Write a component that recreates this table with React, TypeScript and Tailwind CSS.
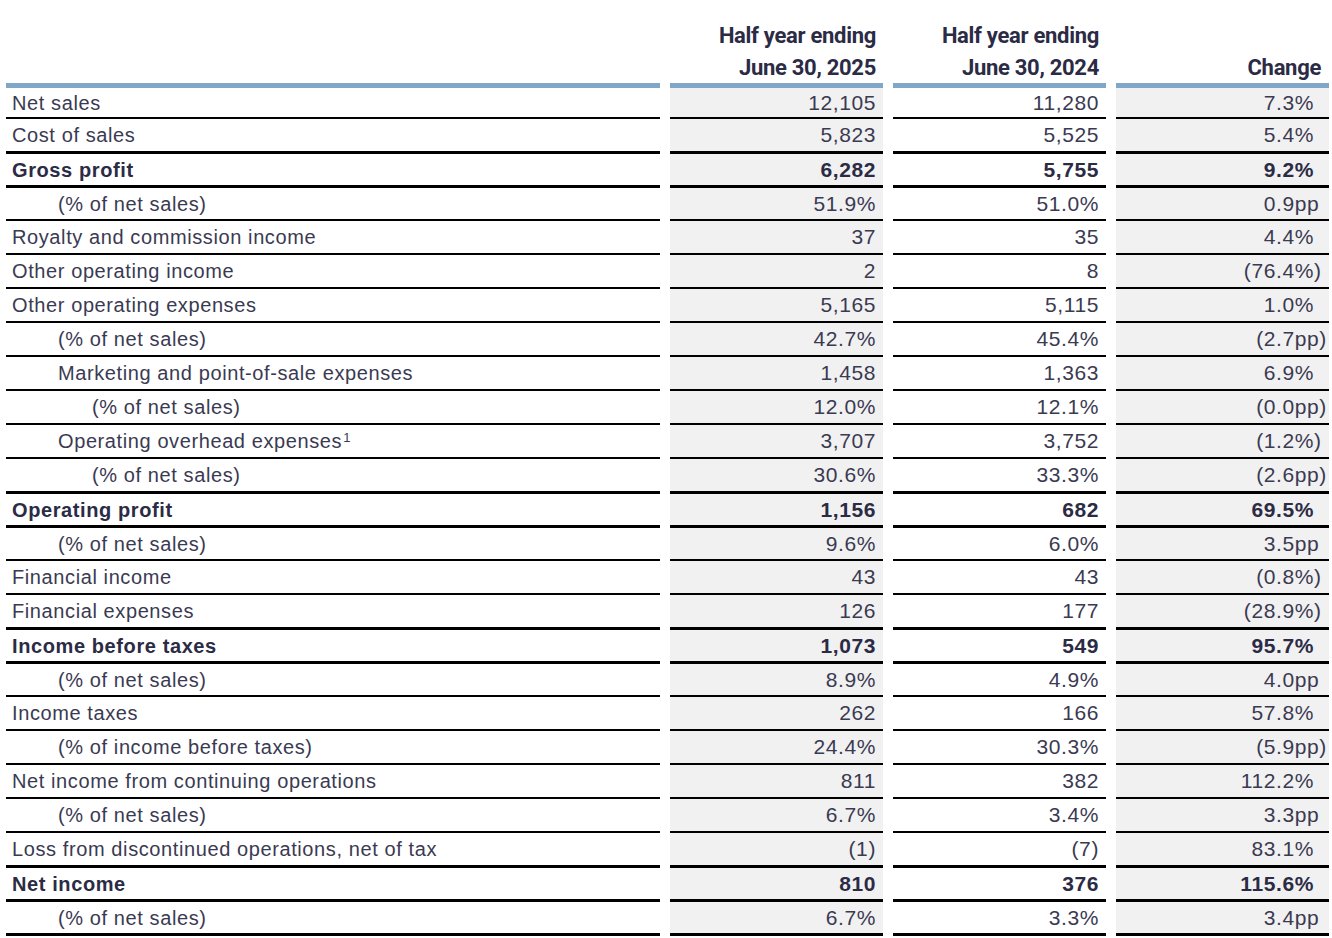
import React from "react";

type Row = { label: string; indent: 0 | 1 | 2; v: [string, string, string]; bold?: boolean; sup?: string };

const rows: Row[] = [
  { label: "Net sales", indent: 0, v: ["12,105", "11,280", "7.3%"] },
  { label: "Cost of sales", indent: 0, v: ["5,823", "5,525", "5.4%"] },
  { label: "Gross profit", indent: 0, v: ["6,282", "5,755", "9.2%"], bold: true },
  { label: "(% of net sales)", indent: 1, v: ["51.9%", "51.0%", "0.9pp"] },
  { label: "Royalty and commission income", indent: 0, v: ["37", "35", "4.4%"] },
  { label: "Other operating income", indent: 0, v: ["2", "8", "(76.4%)"] },
  { label: "Other operating expenses", indent: 0, v: ["5,165", "5,115", "1.0%"] },
  { label: "(% of net sales)", indent: 1, v: ["42.7%", "45.4%", "(2.7pp)"] },
  { label: "Marketing and point-of-sale expenses", indent: 1, v: ["1,458", "1,363", "6.9%"] },
  { label: "(% of net sales)", indent: 2, v: ["12.0%", "12.1%", "(0.0pp)"] },
  { label: "Operating overhead expenses", indent: 1, v: ["3,707", "3,752", "(1.2%)"], sup: "1" },
  { label: "(% of net sales)", indent: 2, v: ["30.6%", "33.3%", "(2.6pp)"] },
  { label: "Operating profit", indent: 0, v: ["1,156", "682", "69.5%"], bold: true },
  { label: "(% of net sales)", indent: 1, v: ["9.6%", "6.0%", "3.5pp"] },
  { label: "Financial income", indent: 0, v: ["43", "43", "(0.8%)"] },
  { label: "Financial expenses", indent: 0, v: ["126", "177", "(28.9%)"] },
  { label: "Income before taxes", indent: 0, v: ["1,073", "549", "95.7%"], bold: true },
  { label: "(% of net sales)", indent: 1, v: ["8.9%", "4.9%", "4.0pp"] },
  { label: "Income taxes", indent: 0, v: ["262", "166", "57.8%"] },
  { label: "(% of income before taxes)", indent: 1, v: ["24.4%", "30.3%", "(5.9pp)"] },
  { label: "Net income from continuing operations", indent: 0, v: ["811", "382", "112.2%"] },
  { label: "(% of net sales)", indent: 1, v: ["6.7%", "3.4%", "3.3pp"] },
  { label: "Loss from discontinued operations, net of tax", indent: 0, v: ["(1)", "(7)", "83.1%"] },
  { label: "Net income", indent: 0, v: ["810", "376", "115.6%"], bold: true },
  { label: "(% of net sales)", indent: 1, v: ["6.7%", "3.3%", "3.4pp"] },
];

const bodyFont = { fontFamily: '"Liberation Sans", Arial, sans-serif' };
const headFont = { fontFamily: 'Roboto, "Liberation Sans", sans-serif' };

function ChangeCell({ value }: { value: string }) {
  const i = value.indexOf(".");
  const left = i >= 0 ? value.slice(0, i) : value;
  const right = i >= 0 ? value.slice(i) : "";
  return (
    <div className="flex w-full">
      <span className="flex-1 text-right">{left}</span>
      <span className="w-[53px] text-left whitespace-nowrap">{right}</span>
    </div>
  );
}

function Head({ lines, pr }: { lines: string[]; pr: string }) {
  return (
    <div
      className={`h-[83px] flex flex-col justify-end items-end ${pr} font-bold text-[22px] tracking-[-0.3px] text-[#2b2b45]`}
      style={headFont}
    >
      {lines.map((l, i) => (
        <div key={i} className={i === lines.length - 1 ? "leading-[31px]" : "leading-[33px]"}>
          {l}
        </div>
      ))}
    </div>
  );
}

export default function App() {
  return (
    <div className="w-[1332px] h-[938px] bg-white text-[#3a3a52] overflow-hidden" style={bodyFont}>
      <div className="ml-[6px] grid grid-cols-[654px_213px_213px_213px] gap-x-[10px]">
        <div className="h-[83px]" />
        <Head lines={["Half year ending", "June 30, 2025"]} pr="pr-[7px]" />
        <Head lines={["Half year ending", "June 30, 2024"]} pr="pr-[7px]" />
        <Head lines={["Change"]} pr="pr-[8px]" />

        {rows.map((r, idx) => {
          const prev = idx > 0 ? rows[idx - 1] : null;
          const first = idx === 0;
          const last = idx === rows.length - 1;
          const thick = !first && (r.bold || (prev && prev.bold));
          const borderCls = first
            ? "border-t-[5px] border-[#80a7c8]"
            : thick
            ? "border-t-[3px] border-black"
            : "border-t-[2px] border-black";
          const lastCls = last ? "border-b-[3px] border-b-black h-[37px]" : "h-[34px]";
          const weight = r.bold ? "font-bold text-[#2b2b45]" : "font-normal";
          const indentCls = r.indent === 0 ? "pl-[6px]" : r.indent === 1 ? "pl-[52px]" : "pl-[86px]";
          const numCls = `text-[21px] tracking-[0.6px] ${weight}`;
          return (
            <React.Fragment key={idx}>
              <div className={`${borderCls} ${lastCls} ${indentCls} flex items-center text-[20px] tracking-[0.6px] whitespace-nowrap ${weight}`}>
                <span>
                  {r.label}
                  {r.sup ? <span className="text-[13px] ml-[1px] relative top-[-6px]">{r.sup}</span> : null}
                </span>
              </div>
              <div className={`${borderCls} ${lastCls} bg-[#f1f1f1] pr-[7px] flex items-center justify-end ${numCls}`}>
                <span>{r.v[0]}</span>
              </div>
              <div className={`${borderCls} ${lastCls} pr-[7px] flex items-center justify-end ${numCls}`}>
                <span>{r.v[1]}</span>
              </div>
              <div className={`${borderCls} ${lastCls} bg-[#f1f1f1] flex items-center ${numCls}`}>
                <ChangeCell value={r.v[2]} />
              </div>
            </React.Fragment>
          );
        })}
      </div>
    </div>
  );
}
